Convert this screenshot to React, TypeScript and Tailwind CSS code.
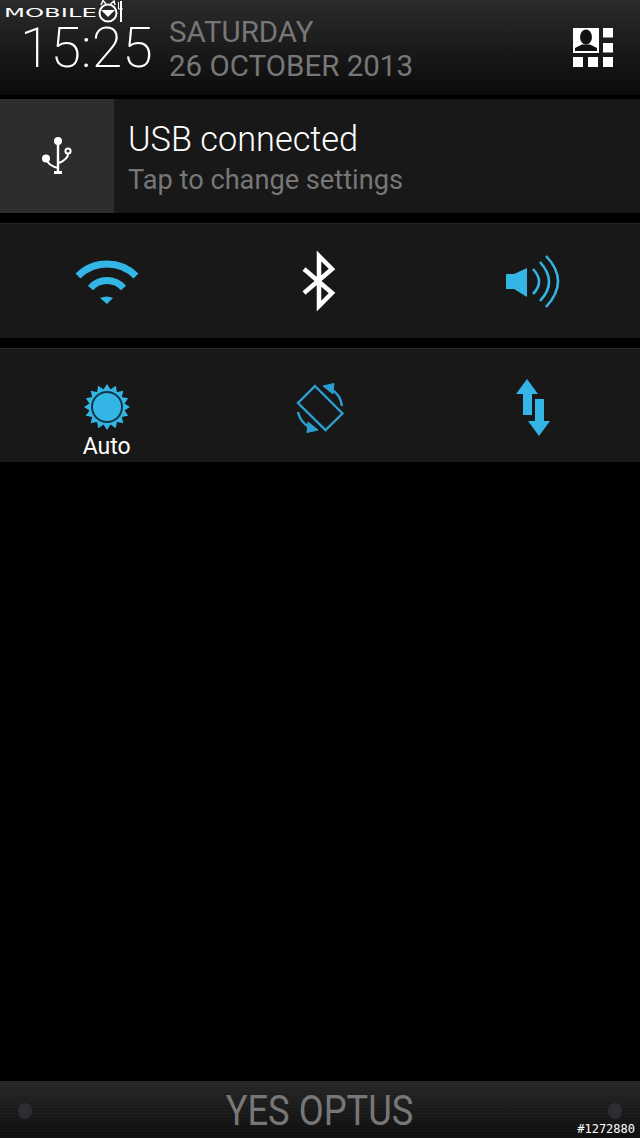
import React from "react";

const BLUE = "#33b5e5";

function WatermarkLogo() {
    return (
        <div className="absolute left-[4px] top-0 flex h-[24px] w-[124px] items-center">
            <span className="origin-left scale-x-[1.87] font-['DejaVu_Sans'] text-[13px] font-normal leading-none text-white">MOBILE</span>
            <svg className="absolute left-[91px] top-0" width="30" height="24" viewBox="0 0 30 24">
                <circle cx="13" cy="13" r="8.5" fill="none" stroke="#fff" strokeWidth="2" />
                <path d="M6 5 L8 0.5 L11 4 M20 5 L19 1 L15.5 4" fill="none" stroke="#fff" strokeWidth="1.5" />
                <path d="M6 10 L20 10 L13 17 Z" fill="#fff" />
                <path d="M26 1 V22" stroke="#fff" strokeWidth="2" />
                <path d="M23.5 2 V9 H28" fill="none" stroke="#fff" strokeWidth="1" />
            </svg>
        </div>
    );
}

function ContactsIcon() {
    return (
        <svg width="40" height="40" viewBox="0 0 40 40">
            <rect x="0" y="1" width="26" height="25" fill="#fff" />
            <ellipse cx="13" cy="10" rx="6" ry="7.5" fill="#111" />
            <path d="M2 24 V21 L9 17.5 H17 L24 21 V24 Z" fill="#111" />
            <rect x="30" y="1" width="10" height="9.5" fill="#fff" />
            <rect x="30" y="16" width="10" height="9.5" fill="#fff" />
            <rect x="0" y="30" width="10" height="10" fill="#fff" />
            <rect x="15" y="30" width="10" height="10" fill="#fff" />
            <rect x="30" y="30" width="10" height="10" fill="#fff" />
        </svg>
    );
}

function UsbIcon() {
    return (
        <svg width="32" height="40" viewBox="0 0 32 40" fill="none">
            <circle cx="17" cy="5" r="4" fill="#fff" />
            <path d="M17 6 V36" stroke="#fff" strokeWidth="2.4" />
            <rect x="13" y="35" width="8" height="3" fill="#fff" />
            <circle cx="5" cy="22.5" r="4" fill="#fff" />
            <path d="M6 25 Q9 30 17 32" stroke="#fff" strokeWidth="2" />
            <circle cx="27" cy="15" r="2.6" stroke="#fff" strokeWidth="2" />
            <path d="M27 18 Q27 23 18 27" stroke="#fff" strokeWidth="2" />
        </svg>
    );
}

function WifiIcon() {
    return (
        <svg width="64" height="48" viewBox="0 0 64 48" fill="none">
            <path d="M3 18 A41 41 0 0 1 61 18" stroke={BLUE} strokeWidth="7" />
            <path d="M15.5 30 A22 22 0 0 1 48.5 30" stroke={BLUE} strokeWidth="7" />
            <path d="M25 40 Q32 37 38 40 L32 46 Z" fill={BLUE} />
        </svg>
    );
}

function BluetoothIcon() {
    return (
        <svg width="40" height="64" viewBox="0 0 40 64" fill="none">
            <path d="M4 20 L32 44 L19 57 V7 L32 20 L4 44" stroke="#fff" strokeWidth="4.5" />
        </svg>
    );
}

function VolumeIcon() {
    return (
        <svg width="56" height="56" viewBox="0 0 56 56" fill="none">
            <path d="M1 19 H9 L22 13 V42 L9 34 H1 Z" fill={BLUE} />
            <path d="M28 14 Q40 27 28 39" stroke={BLUE} strokeWidth="2.5" />
            <path d="M35 7 Q53 27 35 46" stroke={BLUE} strokeWidth="2.5" />
            <path d="M41 1 Q65 26 41 52" stroke={BLUE} strokeWidth="2.5" />
        </svg>
    );
}

function BrightnessIcon() {
    const spikes = Array.from({ length: 16 }, (_, i) => i * 22.5);
    return (
        <svg width="46" height="46" viewBox="-23 -23 46 46">
            {spikes.map((deg) => (
                <path key={deg} d="M-4.5 -16 L0 -23 L4.5 -16 Z" fill={BLUE} transform={`rotate(${deg})`} />
            ))}
            <circle r="17.5" fill={BLUE} />
            <circle r="15" fill={BLUE} stroke="#123543" strokeWidth="2" />
        </svg>
    );
}

function RotateIcon() {
    return (
        <svg width="50" height="50" viewBox="0 0 50 50" fill="none" stroke="#2a9fd0">
            <path d="M20 3 L47.5 30.5 L30.5 47 L3 20 Z" strokeWidth="2.4" />
            <path d="M36 6 A23 23 0 0 1 47 23" strokeWidth="2.4" />
            <path d="M28 3 L39 0.5 L38 11 Z" fill="#2a9fd0" strokeWidth="1" />
            <path d="M3 29 A23 23 0 0 0 14 44" strokeWidth="2.4" />
            <path d="M23 47 L12 49.5 L13 39 Z" fill="#2a9fd0" strokeWidth="1" />
        </svg>
    );
}

function DataIcon() {
    return (
        <svg width="36" height="60" viewBox="0 0 36 60">
            <path d="M12 1 L23 16 H17 V37 H8 V16 H1 Z" fill={BLUE} />
            <path d="M20 21 H29 V43 H35 L24 58 L13 43 H20 Z" fill={BLUE} />
        </svg>
    );
}

export default function App() {
    return (
        <div className="relative flex h-[1138px] w-[640px] flex-col overflow-hidden bg-black font-['Roboto',sans-serif]">
            {/* Header */}
            <div className="flex h-[95px] items-start bg-gradient-to-b from-[#2b2b2b] to-[#0b0b0b] pl-[20px] pr-[27px]">
                <div className="mt-[22px] w-[149px] text-[55.5px] font-extralight leading-[54px] text-white">15:25</div>
                <div className="mt-[15px] flex flex-col text-[29.5px] leading-[34px] text-[#777777]">
                    <span>SATURDAY</span>
                    <span>26 OCTOBER 2013</span>
                </div>
                <div className="ml-auto mt-[27px]">
                    <ContactsIcon />
                </div>
            </div>

            {/* USB notification */}
            <div className="mt-[4px] flex h-[114px] bg-[#181818]">
                <div className="flex w-[114px] items-center justify-center bg-[#2c2d2f]">
                    <UsbIcon />
                </div>
                <div className="flex flex-col pl-[14px] pt-[20px]">
                    <span className="text-[34.3px] font-light leading-[40px] text-white">USB connected</span>
                    <span className="mt-[3px] text-[27.2px] leading-[36px] text-[#777777]">Tap to change settings</span>
                </div>
            </div>

            {/* Quick settings */}
            <div className="mt-[10px] grid h-[115px] grid-cols-3 border-t border-[#262626] bg-[#181818]">
                <div className="flex justify-center pt-[34px]"><WifiIcon /></div>
                <div className="flex justify-center pt-[25px]"><BluetoothIcon /></div>
                <div className="flex justify-center pt-[31px]"><VolumeIcon /></div>
            </div>
            <div className="mt-[10px] grid h-[114px] grid-cols-3 border-t border-[#262626] bg-[#181818]">
                <div className="flex flex-col items-center pt-[35px]">
                    <BrightnessIcon />
                    <span className="mt-[4px] text-[23px] leading-[26px] text-white">Auto</span>
                </div>
                <div className="flex justify-center pt-[34px]"><RotateIcon /></div>
                <div className="flex justify-center pt-[29px]"><DataIcon /></div>
            </div>

            {/* Carrier bar */}
            <div className="mt-auto flex h-[57px] items-center justify-between bg-[repeating-linear-gradient(0deg,rgba(255,255,255,0.015)_0px,rgba(255,255,255,0.015)_1px,transparent_1px,transparent_3px),linear-gradient(to_bottom,#272727,#0e0e0e)] px-[18px] pt-[3px]">
                <span className="h-[16px] w-[14px] rounded-full bg-[#2b2d30]" />
                <span className="scale-x-[0.865] text-[42px] leading-[54px] text-[#777777]">YES OPTUS</span>
                <span className="h-[16px] w-[14px] rounded-full bg-[#2b2d30]" />
            </div>

            {/* Watermarks over the screenshot */}
            <WatermarkLogo />
            <span className="absolute bottom-[2px] right-[5px] font-['DejaVu_Sans_Mono',monospace] text-[12px] leading-[14px] text-white">#1272880</span>
        </div>
    );
}
